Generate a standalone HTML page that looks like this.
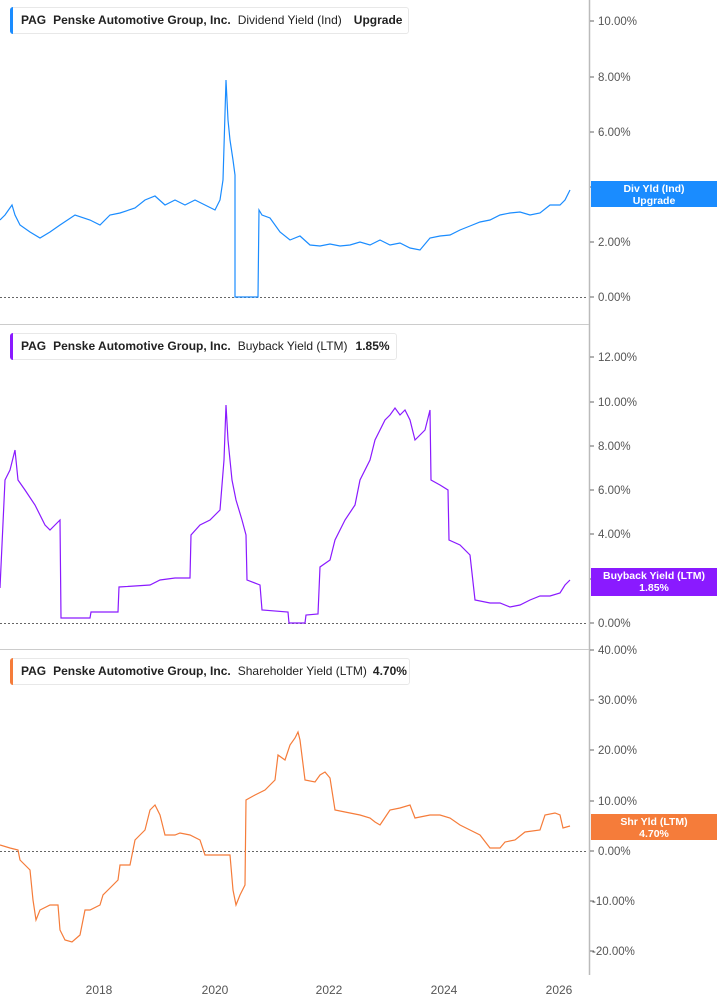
<!DOCTYPE html>
<html><head><meta charset="utf-8"><style>
body{margin:0;width:717px;height:1005px;background:#fff;overflow:hidden;font-family:"Liberation Sans",sans-serif;position:relative}
.hdr{position:absolute;left:10px;height:25px;border:1px solid #e8e8e8;border-radius:3px;background:#fff;font-size:12px;line-height:25px;color:#222;white-space:nowrap;padding-left:10px;padding-right:6px}
.hdr:before{content:"";position:absolute;left:-1px;top:-1px;bottom:-1px;width:3px;border-radius:3px 0 0 3px;background:var(--c)}
.hdr b{font-weight:bold;margin-right:7px}
.hdr span{margin-right:8px}
.lab{position:absolute;left:591px;width:126px;color:#fff;font-weight:bold;font-size:10.5px;text-align:center;line-height:12px;padding-top:2px}
</style></head><body>
<svg width="717" height="1005" style="position:absolute;left:0;top:0" font-family="Liberation Sans" font-size="11.5" fill="#555">
<line x1="589.5" y1="0" x2="589.5" y2="975" stroke="#bbb" stroke-width="1.5"/>
<line x1="0" y1="324.5" x2="589" y2="324.5" stroke="#ccc"/>
<line x1="0" y1="649.5" x2="589" y2="649.5" stroke="#ccc"/>
<g stroke="#666" stroke-dasharray="2,2"><line x1="0" y1="297.5" x2="588" y2="297.5"/><line x1="0" y1="623.5" x2="588" y2="623.5"/><line x1="0" y1="851.5" x2="588" y2="851.5"/></g>
<g stroke="#666"><path d="M590 21h4M590 77h4M590 132h4M590 187h4M590 242h4M590 297h4M590 357h4M590 402h4M590 446h4M590 490h4M590 534h4M590 579h4M590 623h4M590 650h4M590 700h4M590 750h4M590 801h4M590 851h4M590 901h4M590 951h4"/></g>
<g>
<text x="598" y="25">10.00%</text><text x="598" y="81">8.00%</text><text x="598" y="136">6.00%</text><text x="598" y="246">2.00%</text><text x="598" y="301">0.00%</text>
<text x="598" y="361">12.00%</text><text x="598" y="406">10.00%</text><text x="598" y="450">8.00%</text><text x="598" y="494">6.00%</text><text x="598" y="538">4.00%</text><text x="598" y="627">0.00%</text>
<text x="598" y="654">40.00%</text><text x="598" y="704">30.00%</text><text x="598" y="754">20.00%</text><text x="598" y="805">10.00%</text><text x="598" y="855">0.00%</text><text x="592" y="905">-10.00%</text><text x="592" y="955">-20.00%</text>
</g>
<g font-size="12" text-anchor="middle"><text x="99" y="994">2018</text><text x="215" y="994">2020</text><text x="329" y="994">2022</text><text x="444" y="994">2024</text><text x="559" y="994">2026</text></g>
<polyline fill="none" stroke="#1a8cff" stroke-width="1.2" points="0,220 5,215 12,205 15,215 20,225 30,232 40,238 50,232 60,225 75,215 90,220 100,225 110,215 120,213 135,208 145,200 155,196 165,205 175,200 185,205 195,200 205,205 215,210 220,200 223,180 226,80 228,120 230,140 233,160 235,175 235,297 258,297 259,210 262,215 270,218 280,232 290,240 300,236 310,245 320,246 330,244 340,246 350,245 360,242 370,245 380,240 390,245 400,243 410,248 420,250 430,238 440,236 450,235 460,230 470,226 480,222 490,220 500,215 510,213 520,212 530,215 540,213 550,205 560,205 565,200 570,190"/>
<polyline fill="none" stroke="#8a1aff" stroke-width="1.2" points="0,588 5,480 10,470 15,450 18,480 25,490 35,505 45,525 50,530 55,525 60,520 61,618 90,618 91,612 118,612 119,587 150,585 160,580 175,578 190,578 191,535 200,525 210,520 220,510 224,460 226,405 228,440 232,480 236,500 242,520 246,535 247,580 260,585 262,610 288,612 289,623 305,623 306,615 318,614 320,567 330,560 335,540 345,520 355,505 360,480 370,460 375,440 380,430 385,420 390,415 395,408 400,415 405,410 410,420 415,440 420,435 425,430 430,410 431,480 440,485 448,490 449,540 460,545 470,555 475,600 490,603 500,603 510,607 520,605 530,600 540,596 550,596 560,593 565,585 570,580"/>
<polyline fill="none" stroke="#f57c3a" stroke-width="1.2" points="0,845 10,848 18,850 20,860 30,870 33,900 36,920 40,910 50,905 58,905 60,930 65,940 72,942 80,935 85,910 90,910 100,905 103,895 108,890 118,880 120,865 130,865 135,840 145,830 150,810 155,805 160,815 165,835 175,835 180,833 190,835 200,840 205,855 215,855 230,855 233,890 236,905 240,895 245,885 246,800 255,795 265,790 275,780 278,755 285,760 290,745 295,738 298,732 300,740 305,780 315,782 320,775 325,772 330,778 335,810 345,812 360,815 370,818 375,822 380,825 390,810 400,808 410,805 415,818 430,815 440,815 450,818 460,825 470,830 480,835 490,848 500,848 505,842 515,840 525,832 540,830 545,815 555,813 560,815 563,828 570,826"/>
</svg>
<div class="hdr" style="top:7px;--c:#1a8cff"><b>PAG</b><b>Penske Automotive Group, Inc.</b><span>Dividend Yield (Ind)</span><b style="margin:0 0 0 4px">Upgrade</b></div>
<div class="hdr" style="top:333px;--c:#8a1aff"><b>PAG</b><b>Penske Automotive Group, Inc.</b><span>Buyback Yield (LTM)</span><b style="margin:0">1.85%</b></div>
<div class="hdr" style="top:658px;--c:#f57c3a;padding-right:2px"><b>PAG</b><b>Penske Automotive Group, Inc.</b><span style="margin-right:6px">Shareholder Yield (LTM)</span><b style="margin:0">4.70%</b></div>
<div class="lab" style="top:181px;height:24px;background:#1a8cff">Div Yld (Ind)<br>Upgrade</div>
<div class="lab" style="top:568px;height:26px;background:#8a1aff">Buyback Yield (LTM)<br>1.85%</div>
<div class="lab" style="top:814px;height:24px;background:#f57c3a">Shr Yld (LTM)<br>4.70%</div>
</body></html>
